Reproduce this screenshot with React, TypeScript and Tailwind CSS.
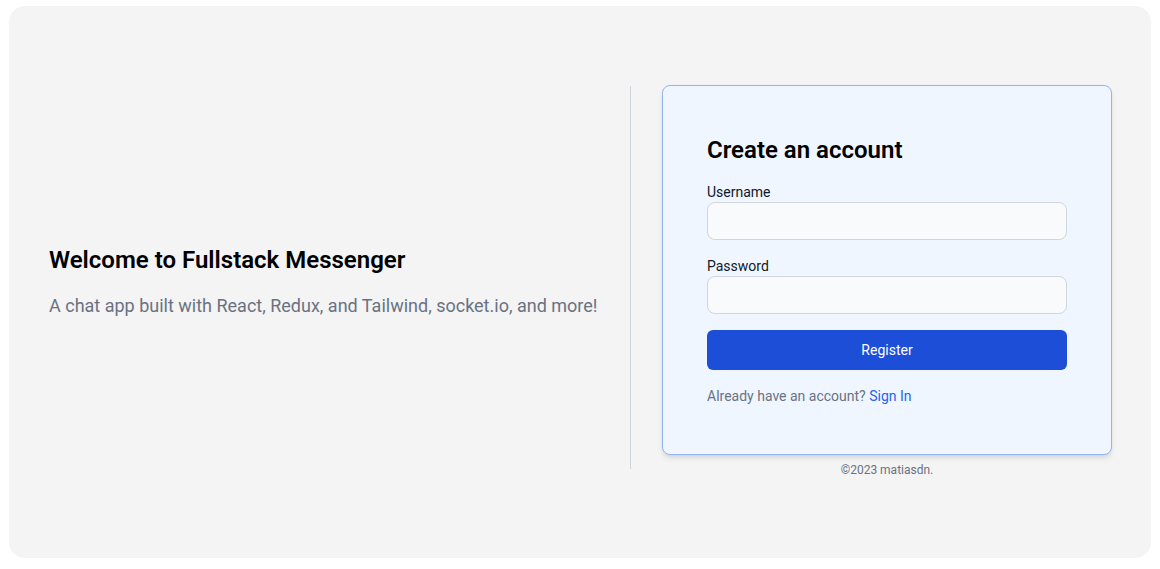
export default function App() {
  return (
    <div className="w-[1160px] h-[569px] bg-white pt-[6px] pl-[9px]" style={{ fontFamily: 'Roboto, "Noto Sans", sans-serif' }}>
      <div className="w-[1142px] h-[552px] bg-[#f4f4f4] rounded-2xl pl-10 pr-[39px] flex items-center">
        <div className="flex-1 flex flex-col">
          <h1 className="text-2xl font-semibold text-black leading-8">Welcome to Fullstack Messenger</h1>
          <p className="mt-[16px] text-lg text-gray-500 leading-7">A chat app built with React, Redux, and Tailwind, socket.io, and more!</p>
        </div>
        <div className="w-px h-[383px] bg-gray-300 mb-[9px] mr-[31px]" />
        <div className="flex flex-col items-center mb-[2px]">
          <div className="w-[450px] bg-[#eff6ff] border border-[#93b4f2] rounded-lg shadow-md px-11 py-12">
            <h2 className="text-2xl font-semibold text-black leading-8 mb-4">Create an account</h2>
            <div className="mb-4">
              <label className="block text-sm leading-5 text-gray-900">Username</label>
              <input type="text" className="block w-full h-[38px] bg-gray-50 border border-gray-300 rounded-lg px-3 text-sm outline-none" />
            </div>
            <div className="mb-4">
              <label className="block text-sm leading-5 text-gray-900">Password</label>
              <input type="password" className="block w-full h-[38px] bg-gray-50 border border-gray-300 rounded-lg px-3 text-sm outline-none" />
            </div>
            <button className="w-full h-10 bg-[#1d4ed8] text-white text-sm rounded-md">Register</button>
            <p className="mt-4 text-sm leading-5 text-gray-500">
              Already have an account? <a className="text-[#2563eb]">Sign In</a>
            </p>
          </div>
          <p className="mt-[7px] text-xs leading-4 text-gray-500">©2023 matiasdn.</p>
        </div>
      </div>
    </div>
  );
}
